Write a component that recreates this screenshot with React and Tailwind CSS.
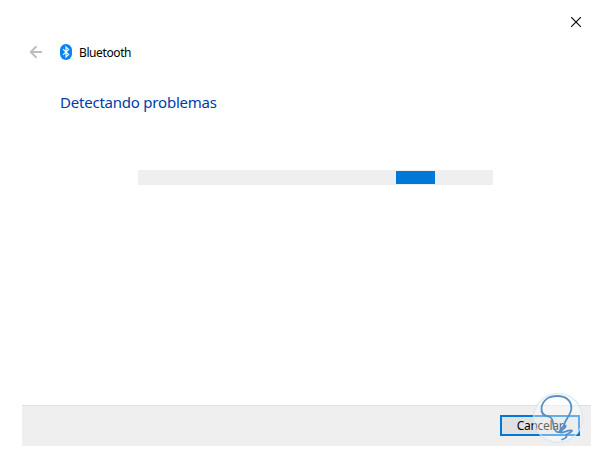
import { ArrowLeft } from 'lucide-react'

function BluetoothIcon() {
  return (
    <svg width="12" height="16" viewBox="0 0 12 16" className="block">
      <rect width="12" height="16" rx="6" fill="#0a84f5" />
      <path d="M3 5.2 8.6 10.6 6 13V3l2.6 2.4L3 10.8" fill="none" stroke="#fff" strokeWidth="1.1" />
    </svg>
  )
}

function BulbMark() {
  return (
    <svg
      width="54"
      height="54"
      viewBox="0 0 54 54"
      className="absolute -top-[15px] right-[6px] pointer-events-none"
    >
      <circle cx="27" cy="27" r="24.5" fill="#fff" fillOpacity="0.4" stroke="#d5e4f1" strokeOpacity="0.7" strokeWidth="1.5" />
      <path
        d="M32.5 36.5C32.5 30 39.5 25 40.3 18C41 10 35 5 26.5 5C18 5 11.5 9 10.5 17C10 22 13 25 18 25.5C23 27 21.5 33 23 37C24 39.5 26 41.5 28 41C30 39.5 32 33.5 34.5 34.5C36 36.5 30 39 29 41.5C32 42.5 37 38.5 41 39.5C41 42 35 42.5 35 44.5C37 46 33 48 31 48.5"
        fill="none"
        stroke="#5790c5"
        strokeWidth="1.8"
        strokeLinecap="round"
        strokeLinejoin="round"
      />
    </svg>
  )
}

export default function App() {
  return (
    <div className="flex h-[454px] w-[614px] flex-col bg-white pl-[22px] pr-[23px] pb-2 font-['Noto_Sans',sans-serif] text-black">

      {/* Title bar */}
      <div className="flex h-11 justify-end pt-[17px] pr-[10px]">
        <button className="h-[10px] w-[10px]" aria-label="Cerrar">
          <svg width="10" height="10" viewBox="0 0 10 10" className="block">
            <path d="M0 0l10 10M10 0L0 10" stroke="#000" strokeWidth="1.1" />
          </svg>
        </button>
      </div>

      <header className="flex h-4 items-center pl-[5px]">
        <ArrowLeft size={18} strokeWidth={2.5} color="#bdbdbd" />
        <span className="ml-[15px]">
          <BluetoothIcon />
        </span>
        <span className="ml-[7px] pt-0.5 text-[12px] leading-4 tracking-[-0.4px]">Bluetooth</span>
      </header>

      <main className="flex-1 px-[38px] pt-[31px]">
        <h1 className="text-[15px] leading-[22px] tracking-[-0.22px] whitespace-nowrap text-[#003ba6]">
          Detectando problemas
        </h1>
        <div className="mt-[57px] ml-[78px] h-[15px] w-[355px] bg-[#efefef] py-px pl-[258px]">
          <div className="h-[13px] w-[39px] bg-[#0078d7]" />
        </div>
      </main>

      <footer className="relative flex h-[41px] justify-end border-t border-[#dfdfdf] bg-[#efefef] pt-[9px] pr-[11px]">
        <button className="h-[21px] w-20 border-2 border-[#0078d7] bg-[#e1e1e1] text-[12px] leading-[17px] tracking-[-0.3px]">
          Cancelar
        </button>
        <BulbMark />
      </footer>
    </div>
  )
}
